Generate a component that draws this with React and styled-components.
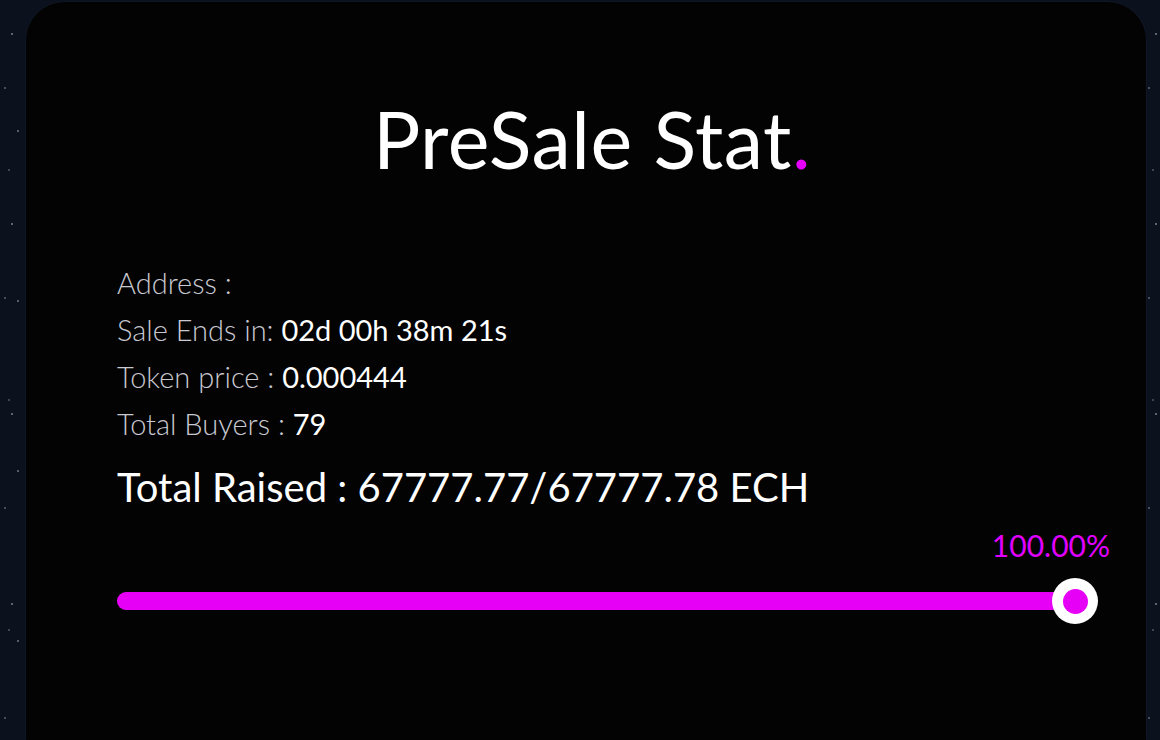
import React from "react";
import styled, { createGlobalStyle } from "styled-components";

const GlobalStyle = createGlobalStyle`
    html, body {
        margin: 0;
        padding: 0;
        height: 100%;
        overflow: hidden;
    }
    body {
        background-color: #0b111d;
        background-image:
            radial-gradient(circle at 12px 34px, rgba(160,170,190,0.55) 0.8px, transparent 1.4px),
            radial-gradient(circle at 5px 88px, rgba(160,170,190,0.4) 0.7px, transparent 1.3px),
            radial-gradient(circle at 18px 131px, rgba(160,170,190,0.5) 0.8px, transparent 1.4px),
            radial-gradient(circle at 9px 170px, rgba(160,170,190,0.35) 0.7px, transparent 1.3px);
        background-size: 22px 190px, 22px 210px, 22px 170px, 22px 230px;
        font-family: Lato, "Noto Sans", sans-serif;
    }
`;

const Page = styled.div`
    padding: 2px 14px 0 26px;
    height: 740px;
    box-sizing: border-box;
    overflow: hidden;
`;

const Card = styled.section`
    background: #030304;
    border-radius: 38px 38px 0 0;
    height: 738px;
    padding: 92px 48px 0 91px;
    box-sizing: border-box;
    box-shadow: 0 0 2px rgba(60, 70, 90, 0.35);
`;

const Title = styled.h1`
    margin: 0 0 0 -31px;
    text-align: center;
    color: #fff;
    font-weight: 400;
    font-size: 79px;
    line-height: 90px;
    letter-spacing: 0.5px;
`;

const Dot = styled.span`
    color: #e600ff;
`;

const InfoList = styled.div`
    margin-top: 82px;
    display: flex;
    flex-direction: column;
    gap: 13px;
`;

const Row = styled.div`
    font-size: 29px;
    line-height: 34px;
    color: #c9c9d1;
    font-weight: 300;
`;

const Value = styled.span`
    color: #fff;
    font-weight: 400;
`;

const Raised = styled.div`
    margin-top: 22px;
    color: #fff;
    font-size: 40px;
    line-height: 48px;
    font-weight: 400;
`;

const Percent = styled.div`
    margin-top: 17px;
    text-align: right;
    color: #e100ff;
    font-size: 30px;
    line-height: 34px;
    margin-right: -12px;
`;

const Track = styled.div`
    margin-top: 30px;
    position: relative;
    height: 18px;
    width: 958px;
    border-radius: 9px;
    background: #2a0a30;
`;

const Fill = styled.div`
    height: 100%;
    border-radius: 9px;
    background: #e600f5;
`;

const Thumb = styled.div`
    position: absolute;
    top: 50%;
    transform: translate(-50%, -50%);
    width: 46px;
    height: 46px;
    border-radius: 50%;
    background: #fff;
    display: flex;
    align-items: center;
    justify-content: center;

    &::after {
        content: "";
        width: 25px;
        height: 25px;
        border-radius: 50%;
        background: #e600f5;
    }
`;

const stats = [
    { label: "Address :", value: "" },
    { label: "Sale Ends in: ", value: "02d 00h 38m 21s" },
    { label: "Token price : ", value: "0.000444" },
    { label: "Total Buyers : ", value: "79" },
];

const progress = 100;

export default function App() {
    return (
        <Page>
            <GlobalStyle />
            <Card>
                <Title>
                    PreSale Stat<Dot>.</Dot>
                </Title>
                <InfoList>
                    {stats.map((s) => (
                        <Row key={s.label}>
                            {s.label}
                            <Value>{s.value}</Value>
                        </Row>
                    ))}
                </InfoList>
                <Raised>Total Raised : 67777.77/67777.78 ECH</Raised>
                <Percent>{progress.toFixed(2)}%</Percent>
                <Track>
                    <Fill style={{ width: `${progress}%` }} />
                    <Thumb style={{ left: `${progress}%` }} />
                </Track>
            </Card>
        </Page>
    );
}
